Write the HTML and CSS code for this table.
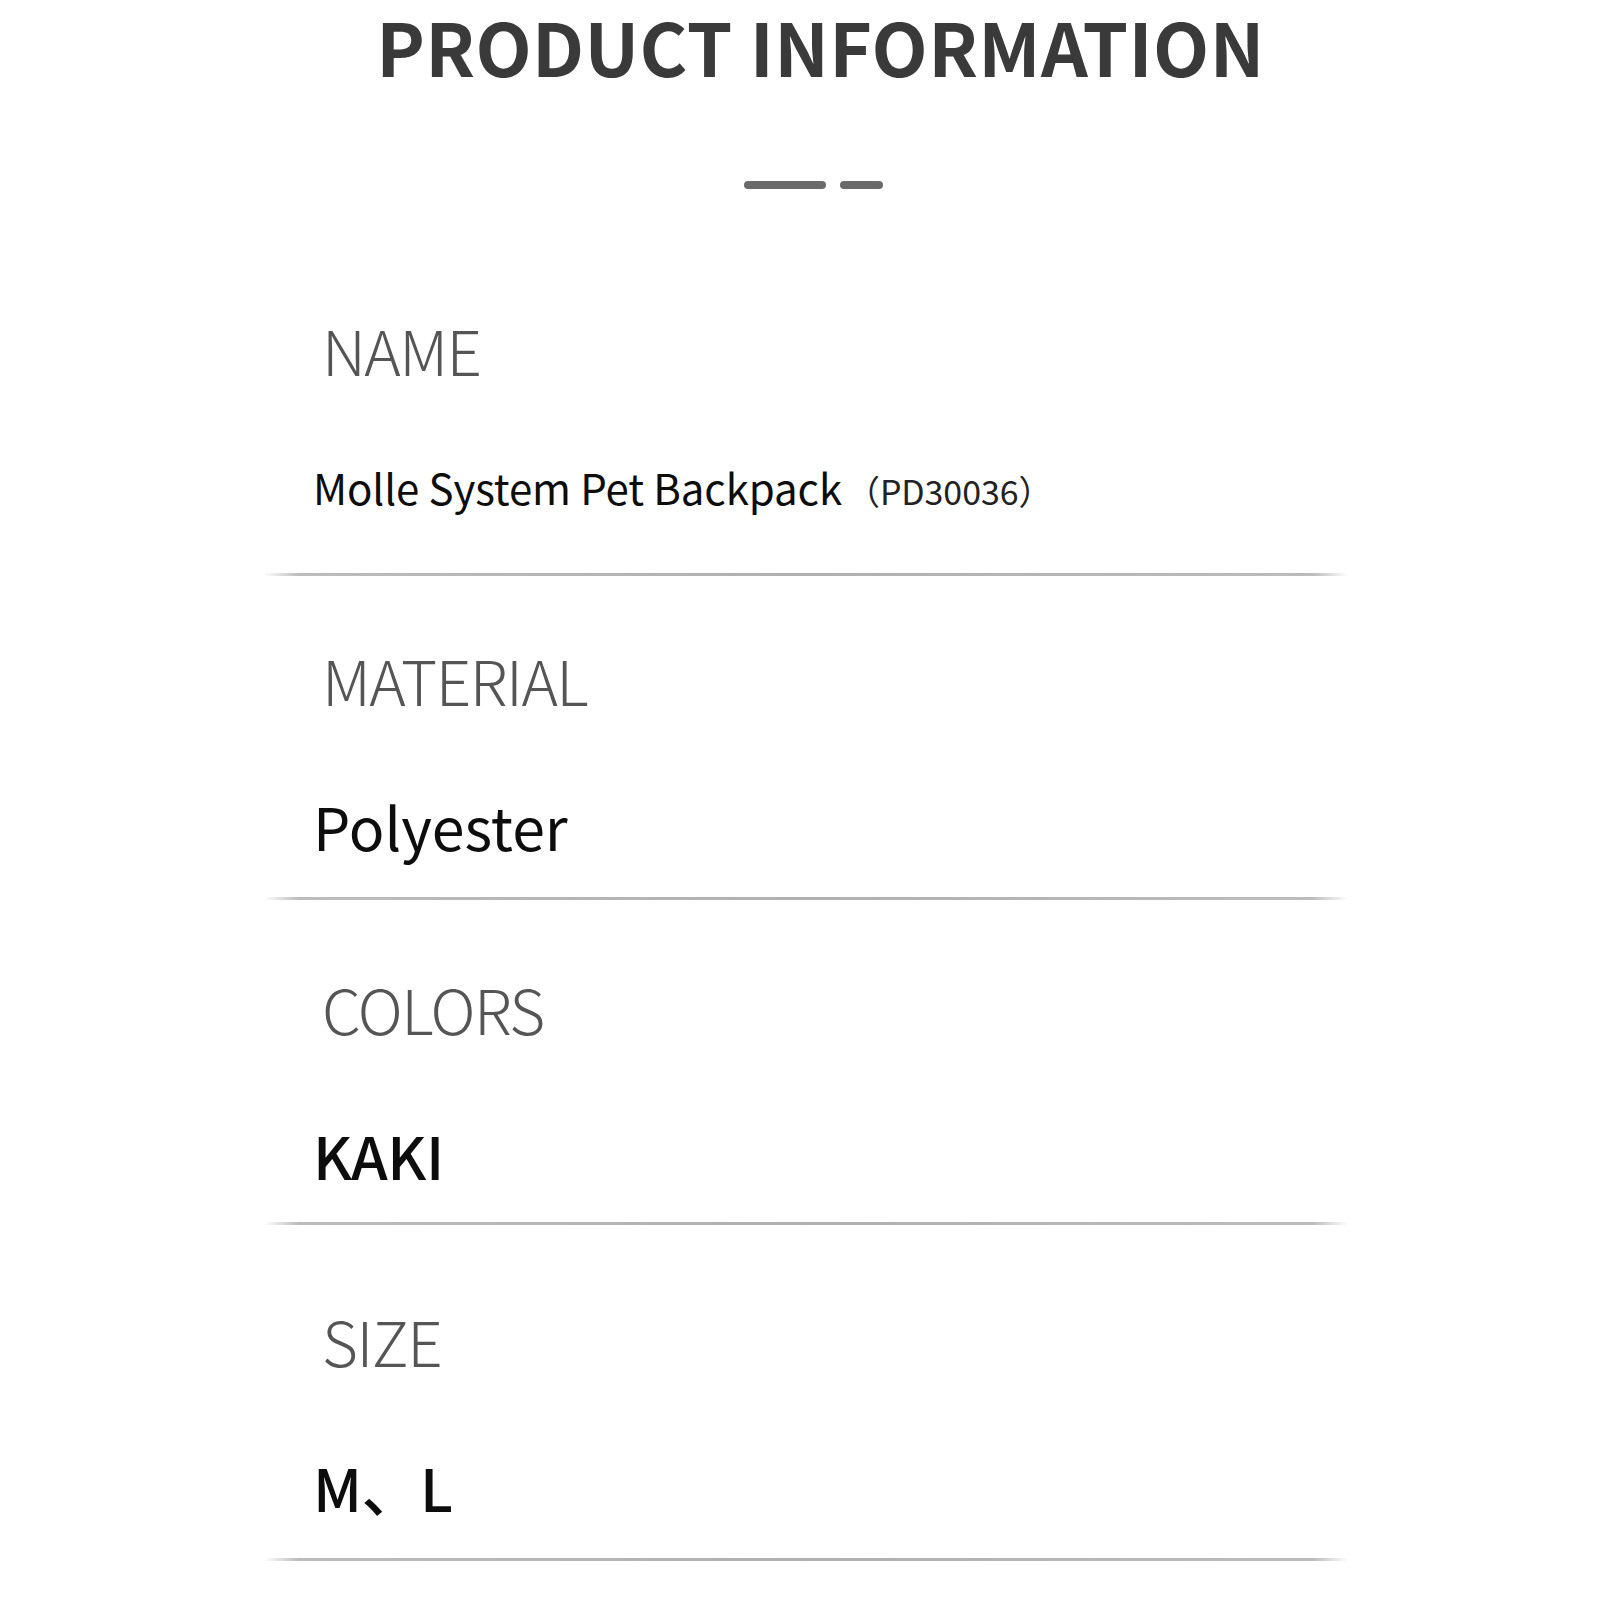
FILE: index.html
```html
<!DOCTYPE html>
<html lang="en">
<head>
<meta charset="utf-8">
<title>Product Information</title>
<link rel="stylesheet" href="styles.css">
</head>
<body>
<div class="page">
  <header class="header">
    <h1 class="title">PRODUCT INFORMATION</h1>
    <div class="dashes"><span class="dash dash--long"></span><span class="dash dash--short"></span></div>
  </header>
  <section class="rows">
    <div class="row row--name">
      <div class="label">NAME</div>
      <div class="value value--name">Molle System Pet Backpack<span class="code">（PD30036）</span></div>
    </div>
    <div class="row row--material">
      <div class="label">MATERIAL</div>
      <div class="value value--large">Polyester</div>
    </div>
    <div class="row row--colors">
      <div class="label">COLORS</div>
      <div class="value value--xl">KAKI</div>
    </div>
    <div class="row row--size">
      <div class="label">SIZE</div>
      <div class="value value--xl">M、L</div>
    </div>
  </section>
</div>
</body>
</html>
```

FILE: styles.css
```css
* { box-sizing: border-box; }
html, body { margin: 0; padding: 0; background: #ffffff; }
body {
  font-family: "Noto Sans CJK SC", "Noto Sans", sans-serif;
  color: #111111;
}
.page { width: 1601px; }

.header {
  display: flex;
  flex-direction: column;
  align-items: center;
  padding-left: 40px;
  padding-top: 2px;
}
.title {
  margin: 0;
  font-size: 73px;
  line-height: 1.2;
  font-weight: 700;
  color: #3a3a3a;
  letter-spacing: 0.4px;
}
.dashes {
  display: flex;
  gap: 14px;
  margin-top: 91px;
  margin-left: -15px;
}
.dash {
  display: block;
  height: 8px;
  border-radius: 4px;
  background: #6a6a6a;
}
.dash--long { width: 82px; }
.dash--short { width: 43px; }

.rows {
  margin-left: 264px;
  width: 1084px;
  display: flex;
  flex-direction: column;
}
.row {
  display: flex;
  flex-direction: column;
  background: linear-gradient(to right, rgba(190,190,190,0) 0, #bcbcbc 35px, #b0b0b0 50%, #bcbcbc calc(100% - 35px), rgba(190,190,190,0) 100%) left bottom / 100% 3px no-repeat;
}
.row--name { padding-top: 129px; padding-bottom: 68px; }
.row--material { padding-top: 72px; padding-bottom: 45px; }
.row--colors { padding-top: 77px; padding-bottom: 41px; }
.row--size { padding-top: 84px; padding-bottom: 45px; }

.label {
  padding-left: 58px;
  font-size: 62px;
  line-height: 1;
  font-weight: 300;
  color: #555555;
  letter-spacing: -1.5px;
}
.value {
  padding-left: 49px;
  margin-top: 86px;
  line-height: 1;
  color: #0d0d0d;
}
.value--name { font-size: 42px; letter-spacing: -0.1px; }
.value--large { font-size: 59px; }
.value--xl { font-size: 59px; font-weight: 500; letter-spacing: -0.5px; }
.code {
  font-size: 34px;
  line-height: 1;
  color: #222222;
  margin-left: 4px;
}
```
